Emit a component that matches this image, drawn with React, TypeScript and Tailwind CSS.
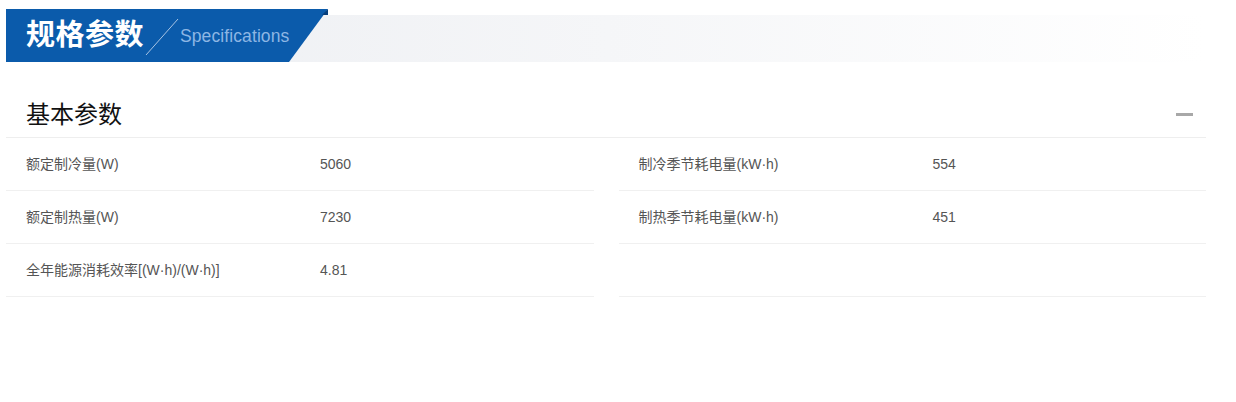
import React from "react"

type Spec = { label: string; value: string }

const leftSpecs: Spec[] = [
  { label: "额定制冷量(W)", value: "5060" },
  { label: "额定制热量(W)", value: "7230" },
  { label: "全年能源消耗效率[(W·h)/(W·h)]", value: "4.81" },
]

const rightSpecs: Spec[] = [
  { label: "制冷季节耗电量(kW·h)", value: "554" },
  { label: "制热季节耗电量(kW·h)", value: "451" },
  { label: "", value: "" },
]

function SpecRow({ spec }: { spec: Spec }) {
  return (
    <div className="flex h-[53px] items-center border-b border-[#f0f0f0] pl-[20px] text-[14px] text-[#555]">
      <span className="w-[294px]">{spec.label}</span>
      <span>{spec.value}</span>
    </div>
  )
}

export default function App() {
  return (
    <div
      className="ml-[6px] w-[1200px] bg-white pt-[9px]"
      style={{ fontFamily: '"Liberation Sans", Arial, "Noto Sans CJK SC", sans-serif' }}
    >
      {/* banner */}
      <div className="grid h-[53px]">
        <div className="col-start-1 row-start-1 mt-[6px] bg-gradient-to-r from-[#eceef2] via-[#f5f6f8] to-white" />
        <div className="col-start-1 row-start-1 flex w-[322px] items-center bg-[#0b5bab] pl-[20px] [clip-path:polygon(0_0,100%_0,283px_100%,0_100%)]">
          <span className="text-[29px] font-bold leading-none tracking-[0.5px] text-white">规格参数</span>
          <svg width="34" height="38" viewBox="0 0 34 38" className="ml-[1px] mt-[2px]">
            <line x1="1" y1="37" x2="33" y2="1" stroke="#a9c4e4" strokeWidth="1" />
          </svg>
          <span className="ml-[1px] mt-[2px] text-[17.5px] tracking-[0.1px] text-[#8db6e4]">Specifications</span>
        </div>
        <div className="col-start-1 row-start-1 ml-[316px] h-[6px] w-[6px] bg-[#083f7c] [clip-path:polygon(100%_0,100%_100%,0_100%)]" />
      </div>

      {/* section header */}
      <div className="flex items-center justify-between border-b border-[#eeeeee] pb-[10px] pl-[20px] pr-[13px] pt-[36px]">
        <h2 className="text-[24px] leading-[29px] text-[#111]" style={{ fontFamily: '"Noto Sans CJK SC", sans-serif' }}>
          基本参数
        </h2>
        <span className="mt-[4px] block h-[3px] w-[17px] bg-[#a8a8a8]" />
      </div>

      <div className="grid grid-cols-2 gap-x-[25px]">
        <div>
          {leftSpecs.map((s, i) => (
            <SpecRow key={i} spec={s} />
          ))}
        </div>
        <div>
          {rightSpecs.map((s, i) => (
            <SpecRow key={i} spec={s} />
          ))}
        </div>
      </div>
    </div>
  )
}
